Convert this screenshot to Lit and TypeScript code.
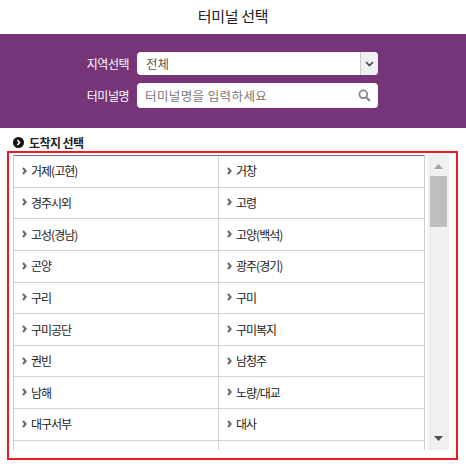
import { LitElement, html, css } from "lit";
import { customElement } from "lit/decorators.js";

const rows: [string, string][] = [
  ["거제(고현)", "거창"],
  ["경주시외", "고령"],
  ["고성(경남)", "고양(백석)"],
  ["곤양", "광주(경기)"],
  ["구리", "구미"],
  ["구미공단", "구미복지"],
  ["권빈", "남청주"],
  ["남해", "노량/대교"],
  ["대구서부", "대사"],
  ["", ""],
];

@customElement("app-root")
export class AppRoot extends LitElement {
  static styles = css`
    :host {
      display: block;
      width: 466px;
      height: 468px;
      overflow: hidden;
      background: #fff;
      font-family: "Noto Sans CJK KR", "Noto Sans", sans-serif;
      font-size: 12px;
      color: #222;
    }
    .title {
      height: 34px;
      display: flex;
      align-items: center;
      justify-content: center;
      font-size: 15px;
      letter-spacing: -0.3px;
      padding-bottom: 3px;
      box-sizing: border-box;
    }
    .panel {
      height: 94px;
      background: #763578;
      box-sizing: border-box;
      padding: 18px 88px 0 0;
      display: flex;
      flex-direction: column;
      gap: 8px;
    }
    .line {
      display: flex;
      justify-content: flex-end;
      align-items: center;
      gap: 8px;
      color: #fff;
      font-size: 12px;
      letter-spacing: -0.5px;
    }
    .field {
      width: 241px;
      background: #fff;
      border-radius: 4px;
      box-sizing: border-box;
      display: flex;
      align-items: center;
      color: #555;
      font-size: 12.5px;
      letter-spacing: 0;
      overflow: hidden;
    }
    .sel { height: 23px; padding-left: 9px; }
    .inp { height: 25px; padding-left: 8px; color: #777; letter-spacing: 0.4px; }
    .grow { flex: 1; }
    .btn {
      width: 17px;
      align-self: stretch;
      background: #f0f0f0;
      border-left: 1px solid #ccc;
      display: flex;
      align-items: center;
      justify-content: center;
    }
    .mag { margin-right: 7px; }
    .sub {
      height: 23px;
      display: flex;
      align-items: center;
      gap: 5px;
      padding: 5px 0 0 13px;
      box-sizing: border-box;
      font-weight: 700;
      font-size: 12px;
      letter-spacing: -0.6px;
      color: #222;
    }
    .box {
      margin: 0 8px 0 7px;
      height: 309px;
      border: 2px solid #ed1c24;
      box-sizing: border-box;
      padding: 2px 7px 0 4px;
      display: flex;
      gap: 3px;
    }
    .list {
      flex: 1;
      height: 295px;
      overflow: hidden;
      border-top: 1px solid #777;
      border-left: 1px solid #ccc;
      border-right: 1px solid #ccc;
      box-sizing: border-box;
    }
    .row {
      display: grid;
      grid-template-columns: 204px 1fr;
      height: 31.65px;
      box-sizing: border-box;
      border-bottom: 1px solid #d2d2d2;
    }
    .cell {
      display: flex;
      align-items: center;
      gap: 4px;
      padding-left: 8px;
      padding-bottom: 1px;
      box-sizing: border-box;
      letter-spacing: -1px;
    }
    .cell + .cell { border-left: 1px solid #d2d2d2; }
    .bar {
      width: 21px;
      height: 295px;
      background: #f0f0f0;
      display: flex;
      flex-direction: column;
      align-items: center;
    }
    .up { margin-top: 9px; }
    .thumb {
      width: 17px;
      height: 51px;
      margin-top: 7px;
      background: #bebebe;
    }
    .down { margin-top: auto; margin-bottom: 9px; }
  `;

  private chev() {
    return html`<svg width="5" height="8" viewBox="0 0 5 8"><path d="M1 1l2.6 3L1 7" fill="none" stroke="#666" stroke-width="2"/></svg>`;
  }

  render() {
    return html`
      <div class="title">터미널 선택</div>
      <div class="panel">
        <div class="line">
          <span>지역선택</span>
          <div class="field sel">
            <span class="grow">전체</span>
            <div class="btn">
              <svg width="9" height="6" viewBox="0 0 9 6"><path d="M1 1l3.5 3.5L8 1" fill="none" stroke="#444" stroke-width="1.6"/></svg>
            </div>
          </div>
        </div>
        <div class="line">
          <span>터미널명</span>
          <div class="field inp">
            <span class="grow">터미널명을 입력하세요</span>
            <svg class="mag" width="13" height="13" viewBox="0 0 13 13"><circle cx="5.3" cy="5.3" r="3.9" fill="none" stroke="#888" stroke-width="1.8"/><path d="M8.2 8.2l3.8 3.8" stroke="#888" stroke-width="2.2"/></svg>
          </div>
        </div>
      </div>
      <div class="sub">
        <svg width="11" height="11" viewBox="0 0 11 11"><circle cx="5.5" cy="5.5" r="5.5" fill="#111"/><path d="M4.3 3l2.4 2.5L4.3 8" fill="none" stroke="#fff" stroke-width="1.5"/></svg>
        <span>도착지 선택</span>
      </div>
      <div class="box">
        <div class="list">
          ${rows.map(
            ([a, b]) => html`<div class="row">
              <div class="cell">${a ? this.chev() : ""}<span>${a}</span></div>
              <div class="cell">${b ? this.chev() : ""}<span>${b}</span></div>
            </div>`
          )}
        </div>
        <div class="bar">
          <svg class="up" width="9" height="5" viewBox="0 0 9 5"><path d="M4.5 0L9 5H0z" fill="#a3a3a3"/></svg>
          <div class="thumb"></div>
          <svg class="down" width="9" height="5" viewBox="0 0 9 5"><path d="M0 0h9L4.5 5z" fill="#505050"/></svg>
        </div>
      </div>
    `;
  }
}
